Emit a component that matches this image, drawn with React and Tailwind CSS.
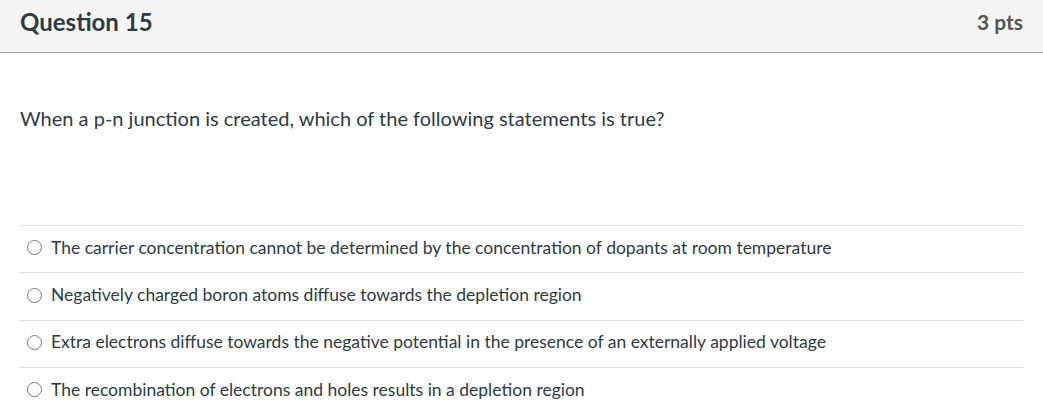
import React from "react";

const answers = [
  "The carrier concentration cannot be determined by the concentration of dopants at room temperature",
  "Negatively charged boron atoms diffuse towards the depletion region",
  "Extra electrons diffuse towards the negative potential in the presence of an externally applied voltage",
  "The recombination of electrons and holes results in a depletion region",
];

export default function App() {
  return (
    <div className="w-[1043px] h-[413px] bg-white overflow-hidden text-[#2d3b45]" style={{ fontFamily: "Lato, 'Noto Sans', sans-serif" }}>
      <div className="h-[53px] bg-[#f5f5f5] border-b border-[#a5a5a5] flex items-center justify-between px-5 pb-2">
        <div className="text-[24px] font-bold">Question 15</div>
        <div className="text-[21px] font-bold text-[#555]">3 pts</div>
      </div>
      <div className="px-5">
        <div className="pt-[52px] text-[20px] leading-[26px]">
          When a p-n junction is created, which of the following statements is true?
        </div>
        <div className="mt-[94px]">
          {answers.map((a, i) => (
            <div key={i} className="border-t border-[#dcdcdc] h-[47.4px] flex items-center pb-[3px]">
              <span className="ml-[7px] w-[15px] h-[15px] rounded-full border border-[#7a7a7a] bg-white shrink-0" />
              <span className="ml-[9px] text-[17.5px]">{a}</span>
            </div>
          ))}
        </div>
      </div>
    </div>
  );
}
